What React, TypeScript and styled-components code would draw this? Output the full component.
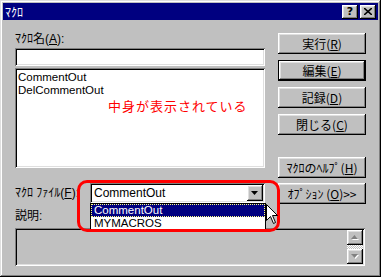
import styled, { createGlobalStyle } from "styled-components";

const GlobalStyle = createGlobalStyle`
  html, body {
    margin: 0;
    padding: 0;
    background: #c0c0c0;
  }
  body {
    font-family: "Liberation Sans", "Noto Sans CJK JP", sans-serif;
    font-size: 12px;
    color: #000;
  }
`;

const raised = `
  box-shadow: inset -1px -1px #000, inset 1px 1px #fff,
    inset -2px -2px #808080, inset 2px 2px #dfdfdf;
`;

const sunken = `
  box-shadow: inset 1px 1px #808080, inset -1px -1px #fff,
    inset 2px 2px #000, inset -2px -2px #dfdfdf;
`;

const Window = styled.div`
  position: relative;
  width: 381px;
  height: 277px;
  box-sizing: border-box;
  padding: 3px;
  background: #c0c0c0;
  box-shadow: inset -1px -1px #000, inset 1px 1px #dfdfdf,
    inset -2px -2px #808080, inset 2px 2px #fff;
  overflow: hidden;
`;

const TitleBar = styled.div`
  height: 17px;
  background: #000080;
  color: #fff;
  display: flex;
  align-items: center;
  justify-content: space-between;
  padding: 0 2px 0 2px;
`;

const TitleText = styled.span`
  font-family: "Noto Sans CJK JP", sans-serif;
  font-size: 12px;
  line-height: 17px;
`;

const TitleButtons = styled.div`
  display: flex;
  gap: 2px;
`;

const CaptionButton = styled.div`
  width: 16px;
  height: 14px;
  background: #c0c0c0;
  ${raised}
  display: flex;
  align-items: center;
  justify-content: center;
  color: #000;
  font-family: "DejaVu Sans", sans-serif;
  font-weight: bold;
  font-size: 11px;
  line-height: 14px;
`;

const Body = styled.div`
  padding: 11px 0 0 12px;
`;

const MainGrid = styled.div`
  display: grid;
  grid-template-columns: 250px 88px;
  column-gap: 13px;
  align-items: start;
`;

const LeftColumn = styled.div`
  display: flex;
  flex-direction: column;
`;

const Label = styled.div`
  height: 16px;
  line-height: 16px;
  white-space: nowrap;
`;

const TextInput = styled.div`
  margin-top: 1px;
  height: 18px;
  background: #fff;
  ${sunken}
`;

const ListBox = styled.div`
  margin-top: 2px;
  height: 100px;
  background: #fff;
  ${sunken}
  box-sizing: border-box;
  padding: 3px 3px;
  position: relative;
`;

const ListItem = styled.div`
  font-size: 11.5px;
  line-height: 13px;
  height: 13px;
`;

const Note = styled.div`
  position: absolute;
  left: 93px;
  top: 30px;
  color: #ff0000;
  font-family: "Noto Sans CJK JP", sans-serif;
  font-size: 13px;
  letter-spacing: 1px;
  line-height: 15px;
`;

const ComboRow = styled.div`
  position: relative;
  margin-top: 15px;
  display: flex;
  align-items: center;
  height: 20px;
`;

const ComboLabel = styled.div`
  width: 75px;
  white-space: nowrap;
  line-height: 16px;
`;

const Combo = styled.div`
  position: relative;
  width: 175px;
  height: 20px;
  box-sizing: border-box;
  background: #fff;
  ${sunken}
  display: flex;
  align-items: center;
  padding: 0 2px 0 4px;
`;

const ComboText = styled.span`
  flex: 1;
  line-height: 16px;
`;

const DropButton = styled.div`
  width: 16px;
  height: 16px;
  background: #c0c0c0;
  ${raised}
  display: flex;
  align-items: center;
  justify-content: center;
`;

const DropList = styled.div`
  position: absolute;
  left: 0;
  top: 20px;
  width: 176px;
  box-sizing: border-box;
  background: #fff;
  border: 1px solid #000;
  z-index: 2;
`;

const DropItem = styled.div<{ $active?: boolean }>`
  height: 13px;
  font-size: 11.5px;
  line-height: 11px;
  padding: 0 2px;
  box-sizing: border-box;
  background: ${(p) => (p.$active ? "#000080" : "#fff")};
  color: ${(p) => (p.$active ? "#fff" : "#000")};
  border: 1px dotted ${(p) => (p.$active ? "#ffff80" : "transparent")};
`;

const Highlight = styled.div`
  position: absolute;
  left: 62px;
  top: -3px;
  width: 203px;
  height: 52px;
  box-sizing: border-box;
  border: 3px solid #ff0000;
  border-radius: 10px;
  z-index: 3;
  pointer-events: none;
`;

const Cursor = styled.svg`
  position: absolute;
  left: 251px;
  top: 21px;
  z-index: 4;
`;

const RightColumn = styled.div`
  display: flex;
  flex-direction: column;
  padding-top: 2px;
`;

const Button = styled.div<{ $default?: boolean; $gap?: number }>`
  height: 21px;
  margin-top: ${(p) => p.$gap ?? 6}px;
  box-sizing: border-box;
  background: #c0c0c0;
  display: flex;
  align-items: center;
  justify-content: center;
  white-space: nowrap;
  font-family: "Noto Sans CJK JP", sans-serif;
  ${(p) =>
    p.$default
      ? `border: 1px solid #000; box-shadow: inset -1px -1px #000, inset 1px 1px #fff, inset -2px -2px #808080, inset 2px 2px #dfdfdf;`
      : raised}
  &:first-child {
    margin-top: 0;
  }
  u {
    text-underline-offset: 1px;
  }
`;

const DescLabel = styled.div`
  margin-top: 5px;
  height: 14px;
  line-height: 14px;
`;

const DescBox = styled.div`
  margin-top: 5px;
  width: 350px;
  height: 38px;
  box-sizing: border-box;
  background: #c0c0c0;
  ${sunken}
  padding: 2px;
  display: flex;
  justify-content: flex-end;
`;

const ScrollBar = styled.div`
  width: 16px;
  display: flex;
  flex-direction: column;
`;

const ScrollButton = styled.div`
  height: 15px;
  background: #c0c0c0;
  ${raised}
  display: flex;
  align-items: center;
  justify-content: center;
`;

const ScrollTrack = styled.div`
  flex: 1;
  background-color: #fff;
  background-image: repeating-conic-gradient(#c0c0c0 0 25%, #fff 0 50%);
  background-size: 2px 2px;
`;

function Arrow({ up, disabled }: { up?: boolean; disabled?: boolean }) {
  const pts = up ? "0,4 7,4 3.5,0" : "0,0 7,0 3.5,4";
  return (
    <svg width="8" height="5" viewBox="0 0 8 5">
      {disabled && (
        <polygon points={pts} fill="#fff" transform="translate(1,1)" />
      )}
      <polygon points={pts} fill={disabled ? "#808080" : "#000"} />
    </svg>
  );
}

export default function App() {
  return (
    <>
      <GlobalStyle />
      <Window>
        <TitleBar>
          <TitleText>ﾏｸﾛ</TitleText>
          <TitleButtons>
            <CaptionButton>?</CaptionButton>
            <CaptionButton>
              <svg width="8" height="7" viewBox="0 0 8 7">
                <path d="M0 0 L8 7 M8 0 L0 7" stroke="#000" strokeWidth="1.6" />
              </svg>
            </CaptionButton>
          </TitleButtons>
        </TitleBar>

        <Body>
          <MainGrid>
            <LeftColumn>
              <Label>
                ﾏｸﾛ名(<u>A</u>):
              </Label>
              <TextInput />
              <ListBox>
                <ListItem>CommentOut</ListItem>
                <ListItem>DelCommentOut</ListItem>
                <Note>中身が表示されている</Note>
              </ListBox>
              <ComboRow>
                <ComboLabel>
                  ﾏｸﾛ ﾌｧｲﾙ(<u>F</u>):
                </ComboLabel>
                <Combo>
                  <ComboText>CommentOut</ComboText>
                  <DropButton>
                    <Arrow />
                  </DropButton>
                  <DropList>
                    <DropItem $active>CommentOut</DropItem>
                    <DropItem>MYMACROS</DropItem>
                  </DropList>
                </Combo>
                <Highlight />
                <Cursor width="13" height="21" viewBox="0 0 13 21">
                  <path
                    d="M0.5 0.5 L0.5 16.5 L4.5 12.5 L7.5 19.5 L9.5 18.5 L6.5 11.5 L11.5 11.5 Z"
                    fill="#fff"
                    stroke="#000"
                    strokeWidth="1"
                  />
                </Cursor>
              </ComboRow>
            </LeftColumn>

            <RightColumn>
              <Button>
                実行(<u>R</u>)
              </Button>
              <Button $default>
                編集(<u>E</u>)
              </Button>
              <Button>
                記録(<u>D</u>)
              </Button>
              <Button>
                閉じる(<u>C</u>)
              </Button>
              <Button $gap={22}>
                ﾏｸﾛのﾍﾙﾌﾟ(<u>H</u>)
              </Button>
              <Button $gap={5}>
                ｵﾌﾟｼｮﾝ (<u>O</u>)&gt;&gt;
              </Button>
            </RightColumn>
          </MainGrid>

          <DescLabel>説明:</DescLabel>
          <DescBox>
            <ScrollBar>
              <ScrollButton>
                <Arrow up disabled />
              </ScrollButton>
              <ScrollTrack />
              <ScrollButton>
                <Arrow disabled />
              </ScrollButton>
            </ScrollBar>
          </DescBox>
        </Body>
      </Window>
    </>
  );
}
